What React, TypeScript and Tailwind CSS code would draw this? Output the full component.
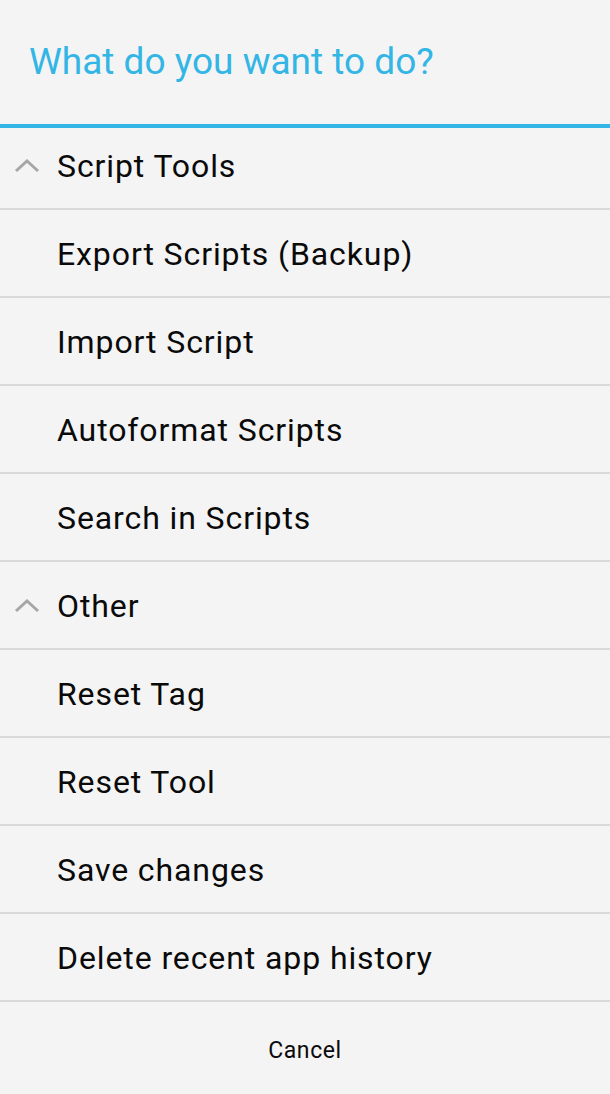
import React from "react";

type Item = { label: string; header?: boolean };

const items: Item[] = [
  { label: "Export Scripts (Backup)" },
  { label: "Import Script" },
  { label: "Autoformat Scripts" },
  { label: "Search in Scripts" },
  { label: "Other", header: true },
  { label: "Reset Tag" },
  { label: "Reset Tool" },
  { label: "Save changes" },
  { label: "Delete recent app history" },
];

const Chevron = () => (
  <svg width="26" height="14" viewBox="0 0 26 14" className="absolute left-[14px]">
    <polyline points="2,12 13,2 24,12" fill="none" stroke="#a6a6a6" strokeWidth="3" />
  </svg>
);

const Row = ({ item, first }: { item: Item; first?: boolean }) => (
  <div
    className={`relative flex items-center pl-[57px] text-[32px] tracking-[0.9px] text-[#0a0a0a] border-b-2 border-[#d9d9d9] ${
      first ? "h-[82px] pb-[4px]" : "h-[88px] pt-[2px]"
    }`}
  >
    {item.header && <Chevron />}
    <span>{item.label}</span>
  </div>
);

export default function App() {
  return (
    <div
      className="w-[610px] h-[1094px] bg-[#f4f4f4] flex flex-col overflow-hidden"
      style={{ fontFamily: "Roboto, 'Noto Sans', sans-serif" }}
    >
      {/* Title */}
      <div className="h-[124px] flex items-center pl-[29px] text-[37px] text-[#33b5e5]">
        What do you want to do?
      </div>
      <div className="h-[4px] bg-[#33b5e5]" />

      <Row item={{ label: "Script Tools", header: true }} first />
      {items.map((it, i) => (
        <Row key={i} item={it} />
      ))}

      {/* Cancel button */}
      <div className="flex-1 flex items-center justify-center text-[23px] tracking-[0.6px] text-[#0a0a0a] pt-[6px]">
        Cancel
      </div>
    </div>
  );
}
